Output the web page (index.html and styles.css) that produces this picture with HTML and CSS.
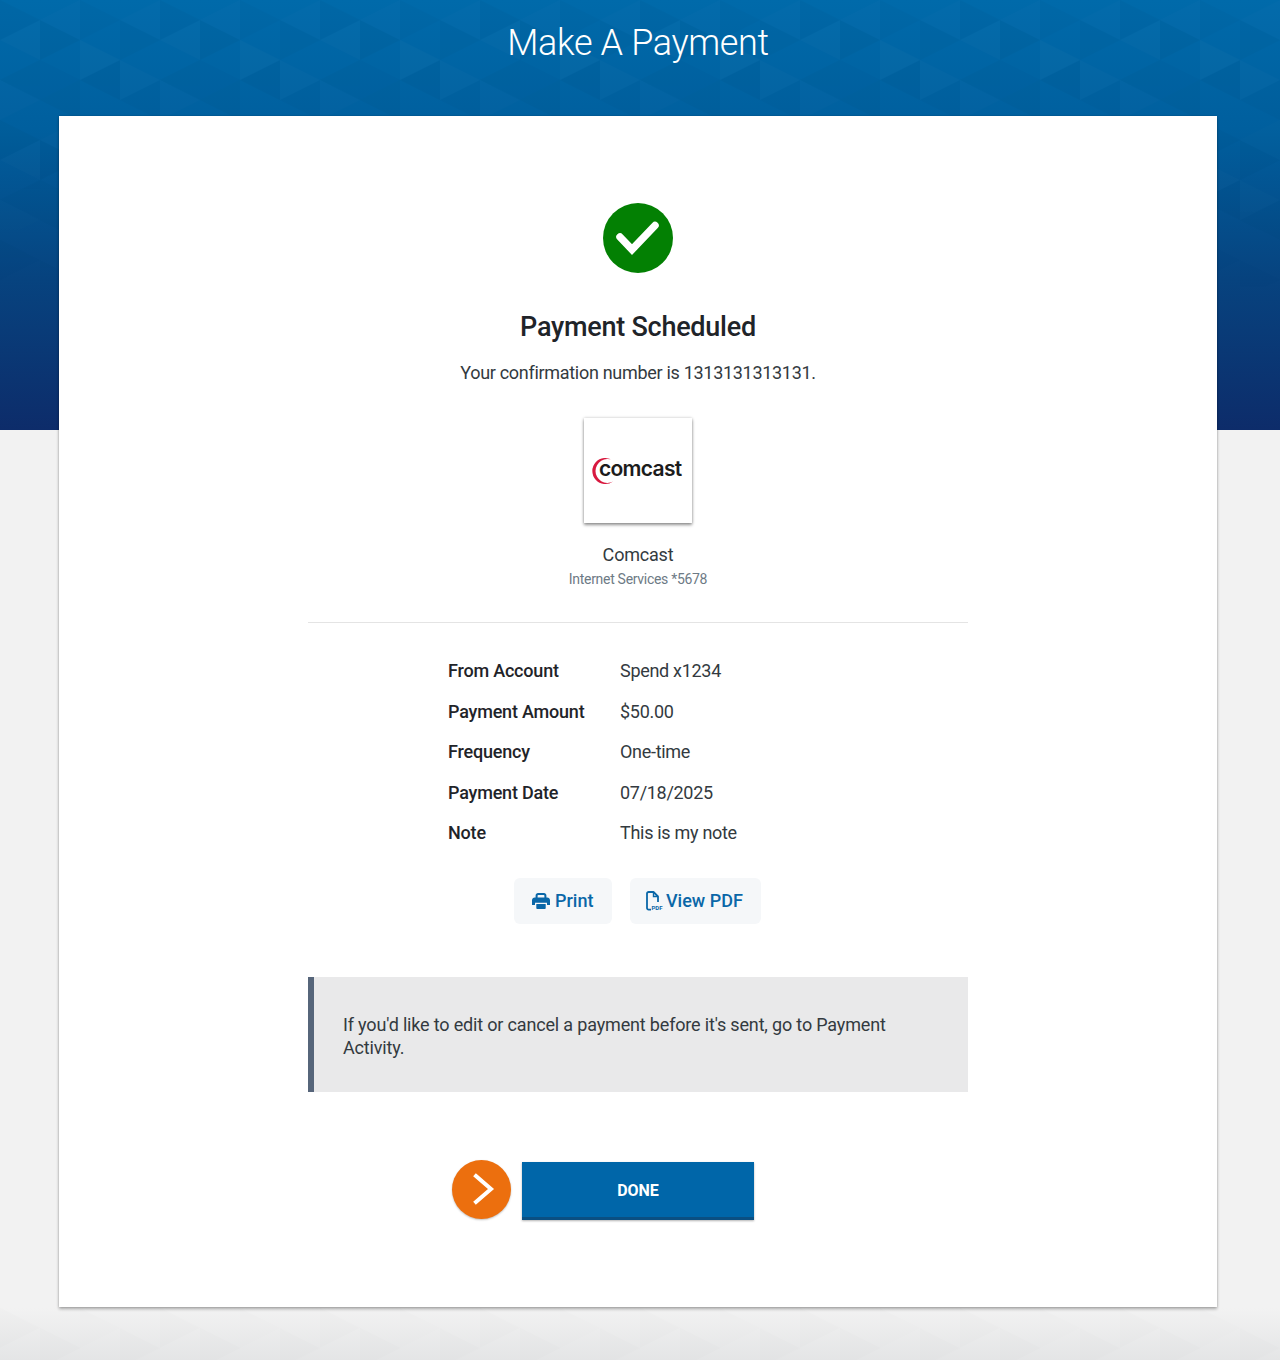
FILE: index.html
```html
<!DOCTYPE html>
<html lang="en">
<head>
    <meta charset="UTF-8">
    <meta name="viewport" content="width=device-width, initial-scale=1.0">
    <title>Make A Payment</title>
    <link rel="stylesheet" href="styles.css">
</head>
<body>
    <svg class="hero-bg" width="1280" height="430" aria-hidden="true">
        <defs>
            <linearGradient id="heroFill" x1="0" y1="0" x2="0" y2="1">
                <stop offset="0" stop-color="#006aaa"/>
                <stop offset="0.3" stop-color="#005f9e"/>
                <stop offset="0.65" stop-color="#07437f"/>
                <stop offset="1" stop-color="#0d2c6a"/>
            </linearGradient>
            <linearGradient id="heroFade" x1="0" y1="0" x2="0" y2="1">
                <stop offset="0" stop-color="#fff" stop-opacity="0.55"/>
                <stop offset="0.4" stop-color="#fff" stop-opacity="0.45"/>
                <stop offset="0.7" stop-color="#fff" stop-opacity="0"/>
            </linearGradient>
            <mask id="heroMask">
                <rect width="1280" height="430" fill="url(#heroFade)"/>
            </mask>
            <pattern id="tris" width="160" height="120" patternUnits="userSpaceOnUse">
                <polygon points="0,0 0,40 40,20" fill="#000" opacity="0.04"/>
                <polygon points="0,80 0,120 40,100" fill="#fff" opacity="0.025"/>
                <polygon points="40,20 40,60 0,40" fill="#fff" opacity="0.03"/>
                <polygon points="40,60 40,100 0,80" fill="#000" opacity="0.035"/>
                <polygon points="40,20 40,60 80,40" fill="#000" opacity="0.05"/>
                <polygon points="40,60 40,100 80,80" fill="#000" opacity="0.025"/>
                <polygon points="80,0 80,40 40,20" fill="#fff" opacity="0.025"/>
                <polygon points="80,80 80,120 40,100" fill="#000" opacity="0.04"/>
                <polygon points="80,0 80,40 120,20" fill="#000" opacity="0.03"/>
                <polygon points="80,40 80,80 120,60" fill="#fff" opacity="0.035"/>
                <polygon points="120,60 120,100 80,80" fill="#000" opacity="0.05"/>
                <polygon points="120,20 120,60 160,40" fill="#000" opacity="0.04"/>
                <polygon points="120,60 120,100 160,80" fill="#fff" opacity="0.03"/>
                <polygon points="160,0 160,40 120,20" fill="#fff" opacity="0.02"/>
                <polygon points="160,80 160,120 120,100" fill="#000" opacity="0.03"/>
            </pattern>
            <linearGradient id="footFill" x1="0" y1="0" x2="0" y2="1">
                <stop offset="0" stop-color="#e4e5e6" stop-opacity="0"/>
                <stop offset="1" stop-color="#e4e5e6"/>
            </linearGradient>
        </defs>
        <rect width="1280" height="430" fill="url(#heroFill)"/>
        <rect width="1280" height="430" fill="url(#tris)" mask="url(#heroMask)"/>
    </svg>
    <svg class="foot-bg" width="1280" height="52" aria-hidden="true">
        <rect width="1280" height="52" fill="url(#footFill)"/>
        <rect width="1280" height="52" fill="url(#tris)" opacity="0.2"/>
    </svg>

    <div class="page">
        <h1>Make A Payment</h1>

        <main class="card">
            <svg class="check" width="70" height="70" viewBox="0 0 70 70">
                <circle cx="35" cy="35" r="35" fill="#038003"/>
                <path d="M17 34 L29 46.5 L52 22.5" fill="none" stroke="#fff" stroke-width="7.5" stroke-linecap="round" stroke-linejoin="miter"/>
            </svg>

            <h2>Payment Scheduled</h2>
            <p class="confirm">Your confirmation number is 1313131313131.</p>

            <div class="logo-box">
                <svg class="logo-arc" width="26" height="28" viewBox="0 0 26 28">
                    <path d="M21 3.5 A13 13 0 1 0 21 24.5 A11.9 11.9 0 1 1 21 3.5 Z" fill="#d8193f"/>
                </svg>
                <span class="logo-text">comcast</span>
            </div>

            <div class="payee">Comcast</div>
            <div class="payee-sub">Internet Services *5678</div>

            <div class="divider"></div>

            <div class="details">
                <div class="detail-row"><strong>From Account</strong><span>Spend x1234</span></div>
                <div class="detail-row"><strong>Payment Amount</strong><span>$50.00</span></div>
                <div class="detail-row"><strong>Frequency</strong><span>One-time</span></div>
                <div class="detail-row"><strong>Payment Date</strong><span>07/18/2025</span></div>
                <div class="detail-row"><strong>Note</strong><span>This is my note</span></div>
            </div>

            <div class="actions">
                <button class="action print-btn" type="button">
                    <svg width="18" height="18" viewBox="0 0 18 18">
                        <path d="M3.6 7V3.4C3.6 1.9 4.7 1 6 1h6c1.3 0 2.4.9 2.4 2.4V7h-2V3.6c0-.4-.3-.7-.7-.7H6.300c-.4 0-.7.3-.7.7V7z" fill="#0a67a8"/>
                        <path d="M2.800 5.500h12.400C16.800 5.500 18 6.700 18 8.300V13h-3v-2.200H3V13H0V8.300C0 6.700 1.200 5.500 2.800 5.500z" fill="#0a67a8"/>
                        <path d="M4.300 12h9.400v4.200c0 .5-.4.800-.8.800H5.100c-.4 0-.8-.3-.8-.8z" fill="#0a67a8"/>
                    </svg>
                    Print
                </button>
                <button class="action pdf-btn" type="button">
                    <svg width="18" height="20" viewBox="0 0 18 20">
                        <path d="M5 18.600H2.600C1.700 18.600 1 17.900 1 17V2.600C1 1.700 1.700 1 2.600 1H7.500L12 5.500V11" fill="none" stroke="#0a67a8" stroke-width="1.800" stroke-linejoin="round"/>
                        <path d="M7.500 1V5.500H12" fill="none" stroke="#0a67a8" stroke-width="1.400"/>
                        <text x="5.500" y="18.800" class="pdf-tag">PDF</text>
                    </svg>
                    View PDF
                </button>
            </div>

            <div class="notice">If you'd like to edit or cancel a payment before it's sent, go to Payment Activity.</div>

            <div class="done-row">
                <div class="done-arrow">
                    <svg width="59" height="59" viewBox="0 0 59 59">
                        <path d="M24 16 L39 29 L24 42" fill="none" stroke="#fff" stroke-width="4" stroke-linecap="square"/>
                    </svg>
                </div>
                <button class="done-btn" type="button">DONE</button>
            </div>
        </main>
    </div>
</body>
</html>
```

FILE: styles.css
```css
html, body {
    margin: 0;
    padding: 0;
}
body {
    position: relative;
    width: 1280px;
    height: 1360px;
    overflow: hidden;
    background: #f2f2f2;
    font-family: Roboto, 'Liberation Sans', sans-serif;
    color: #333a40;
}
.hero-bg {
    position: absolute;
    top: 0;
    left: 0;
}
.foot-bg {
    position: absolute;
    bottom: 0;
    left: 0;
}
.page {
    position: relative;
    width: 1276px;
    display: flex;
    flex-direction: column;
    align-items: center;
}
h1 {
    margin: 0;
    height: 116px;
    line-height: 87px;
    font-size: 36px;
    font-weight: 300;
    letter-spacing: -0.35px;
    color: #fff;
    text-align: center;
}
.card {
    box-sizing: border-box;
    width: 1158px;
    height: 1191px;
    padding-top: 87px;
    background: #fff;
    box-shadow: 0 2px 3px rgba(0, 0, 0, 0.3), 0 0 2px rgba(0, 0, 0, 0.15);
    display: flex;
    flex-direction: column;
    align-items: center;
}
.check {
    display: block;
}
h2 {
    margin: 36px 0 0;
    font-size: 27px;
    line-height: 36px;
    font-weight: 500;
    letter-spacing: -0.25px;
    color: #1f2429;
}
.confirm {
    margin: 16px 0 0;
    font-size: 18px;
    line-height: 24px;
    letter-spacing: -0.3px;
}
.logo-box {
    box-sizing: border-box;
    width: 108px;
    height: 105px;
    margin-top: 33px;
    padding-left: 8px;
    background: #fff;
    box-shadow: 0 2px 3px rgba(0, 0, 0, 0.4), 0 0 3px rgba(0, 0, 0, 0.2);
    display: flex;
    align-items: center;
}
.logo-arc {
    flex: none;
    margin-right: -19px;
}
.logo-text {
    margin-top: -4px;
    font-family: Inter, sans-serif;
    font-size: 21px;
    font-weight: 600;
    letter-spacing: -0.7px;
    color: #1c1c1c;
}
.payee {
    margin-top: 20px;
    font-size: 18px;
    line-height: 24px;
    letter-spacing: -0.2px;
}
.payee-sub {
    margin-top: 3px;
    font-size: 14px;
    line-height: 18px;
    letter-spacing: -0.3px;
    color: #6d7a85;
}
.divider {
    width: 660px;
    height: 1px;
    margin-top: 34px;
    background: #e4e4e4;
}
.details {
    width: 380px;
    margin-top: 28px;
}
.detail-row {
    display: grid;
    grid-template-columns: 172px 1fr;
    height: 40.5px;
    line-height: 40px;
    font-size: 18px;
    letter-spacing: -0.3px;
}
.detail-row strong {
    font-weight: 500;
    letter-spacing: -0.2px;
    color: #1f2429;
}
.actions {
    display: flex;
    gap: 18px;
    margin: 24px 1px 0 0;
}
.action {
    display: flex;
    align-items: center;
    gap: 5px;
    height: 46px;
    border: none;
    border-radius: 6px;
    background: #f5f7f9;
    color: #0a67a8;
    font-family: inherit;
    font-size: 18px;
    font-weight: 500;
}
.print-btn {
    width: 98px;
    padding: 0 0 0 18px;
}
.pdf-btn {
    width: 131px;
    padding: 0 0 0 16px;
    gap: 2px;
}
.pdf-tag {
    font-size: 6px;
    font-weight: 700;
    fill: #0a67a8;
}
.notice {
    box-sizing: border-box;
    width: 660px;
    height: 115px;
    margin-top: 53px;
    padding: 36px 60px 0 29px;
    border-left: 6px solid #56657a;
    background: #e9e9ea;
    font-size: 18px;
    line-height: 23px;
    letter-spacing: -0.17px;
}
.done-row {
    display: grid;
    grid-template-columns: 1fr 232px 1fr;
    column-gap: 11px;
    align-items: center;
    width: 660px;
    margin-top: 70px;
}
.done-arrow {
    grid-column: 1;
    justify-self: end;
    width: 59px;
    height: 59px;
    border-radius: 50%;
    background: #ec6f0e;
    box-shadow: 0 1px 2px rgba(0, 0, 0, 0.25);
    margin-top: -2px;
}
.done-btn {
    grid-column: 2;
    box-sizing: border-box;
    height: 58px;
    padding-top: 4px;
    border: none;
    border-bottom: 3px solid #0a4f82;
    background: #0066a9;
    box-shadow: 0 1px 2px rgba(0, 0, 0, 0.3);
    color: #fff;
    font-family: inherit;
    font-size: 16px;
    font-weight: 700;
}
```
